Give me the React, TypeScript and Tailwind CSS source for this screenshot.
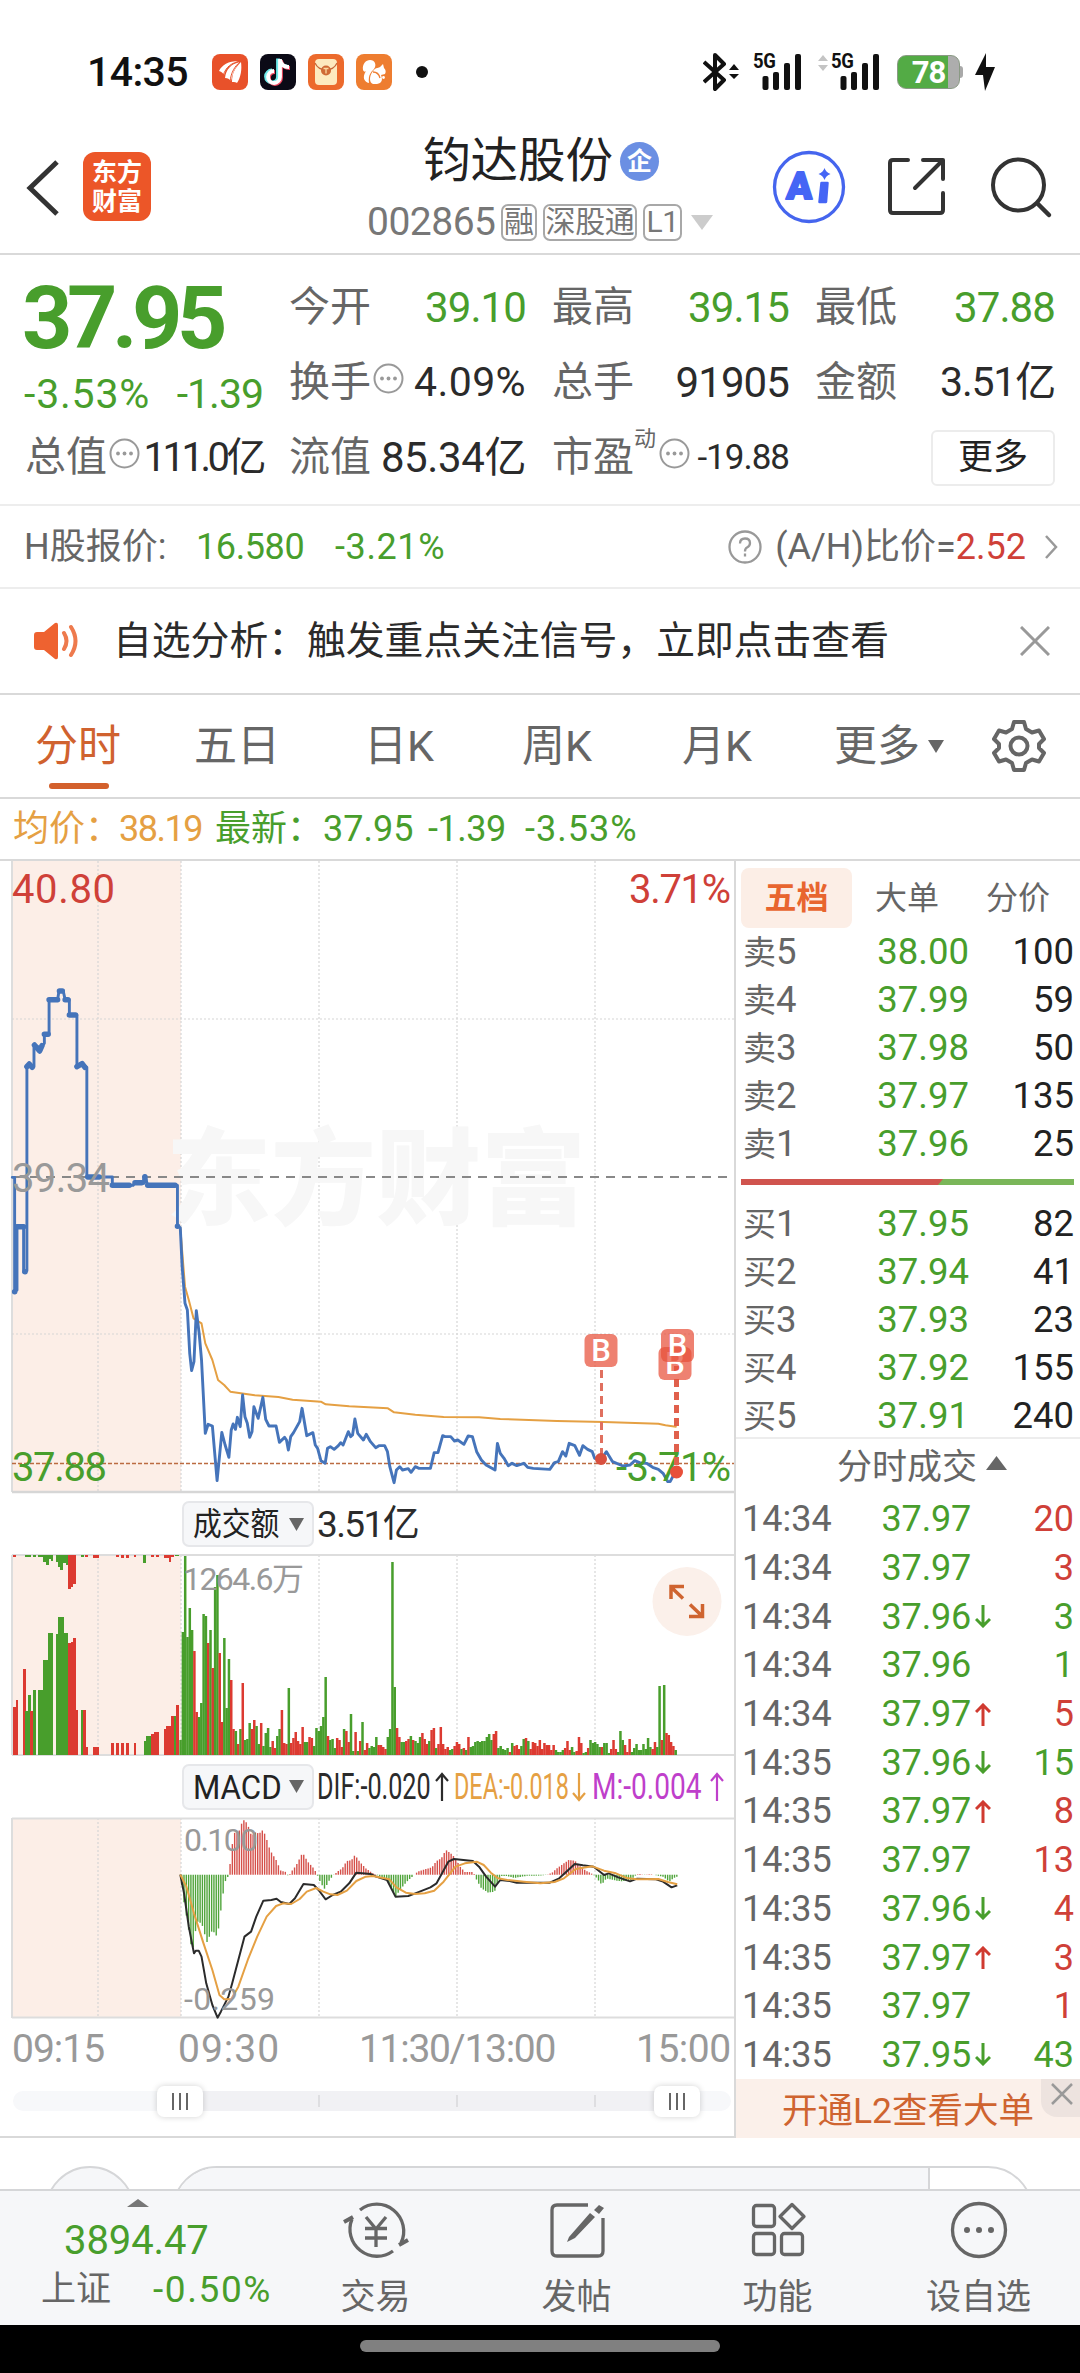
import type { ReactNode } from 'react'

const GREEN = '#489e2c'
const RED = '#dc3a31'

interface Level {
  label: string
  price: string
  volume: string
}

interface Trade {
  time: string
  price: string
  volume: string
  dir?: 'up' | 'down'
  side: 'buy' | 'sell'
}

const asks: Level[] = [
  { label: '卖5', price: '38.00', volume: '100' },
  { label: '卖4', price: '37.99', volume: '59' },
  { label: '卖3', price: '37.98', volume: '50' },
  { label: '卖2', price: '37.97', volume: '135' },
  { label: '卖1', price: '37.96', volume: '25' },
]

const bids: Level[] = [
  { label: '买1', price: '37.95', volume: '82' },
  { label: '买2', price: '37.94', volume: '41' },
  { label: '买3', price: '37.93', volume: '23' },
  { label: '买4', price: '37.92', volume: '155' },
  { label: '买5', price: '37.91', volume: '240' },
]

const trades: Trade[] = [
  { time: '14:34', price: '37.97', volume: '20', side: 'buy' },
  { time: '14:34', price: '37.97', volume: '3', side: 'buy' },
  { time: '14:34', price: '37.96', volume: '3', dir: 'down', side: 'sell' },
  { time: '14:34', price: '37.96', volume: '1', side: 'sell' },
  { time: '14:34', price: '37.97', volume: '5', dir: 'up', side: 'buy' },
  { time: '14:35', price: '37.96', volume: '15', dir: 'down', side: 'sell' },
  { time: '14:35', price: '37.97', volume: '8', dir: 'up', side: 'buy' },
  { time: '14:35', price: '37.97', volume: '13', side: 'buy' },
  { time: '14:35', price: '37.96', volume: '4', dir: 'down', side: 'buy' },
  { time: '14:35', price: '37.97', volume: '3', dir: 'up', side: 'buy' },
  { time: '14:35', price: '37.97', volume: '1', side: 'buy' },
  { time: '14:35', price: '37.95', volume: '43', dir: 'down', side: 'sell' },
]

// Series are stored on a 1568-wide grid, three units per pixel vertically
const SX = 740 / 1568

const priceLine =
  '26,-8 31,-8 31,335 36,330 36,138 50,138 50,277 57,272 57,-340 62,-350 68,-336 72,-340 72,-405 80,-400 84,-385 90,-405 94,-410 94,-437 104,-437 104,-541 122,-541 125,-567 134,-567 138,-541 147,-541 147,-495 163,-495 163,-338 174,-350 184,-338 184,-9 210,-9 238,-9 238,16 282,16 286,8 305,10 307,-12 313,16 376,16 376,138 382,143 386,260 392,370 397,390 402,520 406,572 411,545 416,392 422,460 427,540 435,760 441,733 450,738 455,820 460,902 465,830 470,757 477,795 485,832 490,750 494,732 499,748 503,712 509,740 514,645 519,710 524,730 529,772 534,755 538,680 547,715 557,652 563,718 570,738 585,738 592,787 603,772 607,780 611,810 616,770 622,758 635,725 640,685 650,767 663,758 668,795 673,805 680,842 689,850 694,805 700,800 708,808 717,797 722,788 727,795 738,755 743,770 747,765 752,717 758,760 770,780 776,763 785,785 796,803 803,797 815,797 821,815 826,860 835,908 840,870 847,860 853,870 865,866 871,877 880,860 888,865 912,865 920,818 928,818 938,767 943,770 955,770 963,783 970,780 983,793 992,768 1001,770 1010,815 1020,840 1030,855 1049,870 1054,790 1060,820 1068,835 1077,857 1085,850 1095,857 1110,850 1118,862 1130,865 1165,868 1175,848 1183,845 1192,815 1199,828 1206,790 1218,797 1228,826 1235,797 1245,808 1255,815 1260,835 1273,840 1285,815 1298,845 1320,858 1335,855 1345,842 1355,848 1370,850 1383,862 1395,868 1405,880 1415,905 1420,905 1430,878'

// Auction ticks, drawn heavier than the rest of the line
const auctionDots =
  'M31,335h.1 M36,140h14 M53,275h.1 M57,-340l5,-8 6,10 M73,-405l11,18 5,-16 M94,-437h8 M104,-541h18 M126,-567h6 M138,-541h6 M147,-495h13 M163,-340l11,-9 6,11 M186,-9h24 M238,16h36 M286,8h14 M307,-10v10 M313,16h58 M376,139h.1'

const avgLine =
  '382,143 392,320 400,360 410,415 427,430 435,490 450,540 462,600 475,615 488,635 510,640 540,646 590,651 620,659 680,665 690,673 740,679 822,685 835,697 880,704 940,711 1015,712 1060,717 1180,723 1280,726 1395,731 1410,736 1432,740'

const difLine =
  '382,374 390,430 400,530 411,610 415,602 421,602 427,620 437,700 450,765 461,803 468,785 484,740 492,700 505,630 518,560 532,545 543,500 558,452 575,450 586,446 595,456 613,462 625,445 643,402 665,405 675,420 690,448 705,435 722,425 740,400 755,368 785,372 797,380 820,390 838,440 865,438 880,430 912,412 925,400 950,335 962,327 1002,333 1015,350 1030,380 1049,410 1060,390 1080,393 1095,398 1165,398 1185,385 1218,342 1235,346 1258,350 1280,375 1290,370 1310,382 1335,394 1350,386 1390,388 1405,395 1423,412 1435,406'

const deaLine =
  '382,374 395,410 411,490 430,575 450,660 465,735 475,748 490,748 505,710 525,630 545,560 565,500 585,468 600,460 617,462 635,447 650,425 670,414 685,425 700,433 715,435 735,422 755,393 775,380 790,378 825,388 840,412 860,428 880,432 900,430 920,422 940,395 965,350 985,340 1010,335 1025,345 1040,368 1055,385 1075,390 1110,395 1145,400 1175,396 1195,385 1220,357 1255,349 1280,362 1305,370 1330,385 1350,388 1395,387 1415,396 1435,403'

// One bar per minute from 09:30, positive = red, negative = green
const volumes = [
  -15, -123, -199, -118, -147, -125, 104, 43, -38, -52, -141, -139, 112, -125, 87, -168, -180, 102, 33, -117, -47, -96, 75,
  26, -24, 11, -26, 72, -15, -16, -32, 26, 35, -29, -11, 32, -9, -22, -27, -8, 14, 7, -19, -26, 45, 12, 11, -67, 12, 17, 23,
  14, 11, 28, -13, -13, 18, 17, -9, -27, -24, -29, -38, -78, 19, -15, -16, -7, 17, 15, 8, -26, 24, 13, -41, -4, 23, -4, 14,
  -33, 5, 12, -7, -9, -8, -18, 10, 10, 8, 6, -18, -26, -193, -68, 27, 18, -13, -13, 14, 16, -19, 15, -14, -12, -18, 22, 16,
  11, -14, 25, 27, -7, 11, 28, 11, 6, 8, -5, -6, 9, 13, 11, -6, 7, -5, 18, -8, -9, -13, -14, -13, -14, -14, -18, -21, -15,
  21, 24, -7, -9, -6, -5, -7, 3, -12, 9, 10, 6, -9, -16, 17, -14, 6, 13, 12, 9, 15, 6, 12, 10, 10, 5, 10, -5, -3, -3, -5, 7,
  14, 5, -8, -3, 4, 18, 12, -2, -3, 7, -15, -12, -13, -11, -8, 8, -12, -12, -2, 6, 15, 6, -3, -24, -15, 10, 3, 16, -3, -7,
  -11, -5, -5, -11, -6, -17, -8, 6, 13, -8, -69, 15, -70, 22, 20, 13, 9, -5,
]

// Main session bar pitch, in grid units
const STEP = 1054 / volumes.length

// [x0, x1, top, red]
const auctionBars: [number, number, number, number][] = [
  [27, 33, 500, 1], [33, 39, 480, 1], [49, 55, 388, 1], [54, 60, 513, 0], [59, 66, 465, 0], [64, 70, 513, 1],
  [70, 77, 450, 0], [81, 91, 450, 0], [91, 102, 360, 0], [102, 112, 280, 0], [118, 124, 282, 0], [123, 135, 232, 0],
  [135, 145, 278, 0], [144, 150, 310, 1], [150, 156, 306, 1], [155, 161, 295, 1], [160, 166, 510, 1], [171, 176, 510, 0],
  [176, 182, 510, 1], [181, 187, 620, 1], [197, 210, 620, 1], [235, 241, 610, 1], [246, 252, 610, 1], [257, 263, 610, 1],
  [267, 273, 610, 1], [283, 289, 610, 1], [305, 311, 603, 0], [309, 322, 587, 0], [320, 326, 583, 1], [326, 337, 576, 1],
  [347, 353, 567, 1], [352, 363, 558, 1], [362, 369, 527, 1], [368, 374, 527, 0], [373, 379, 496, 1],
]

const hangingBars: [number, number, number, number][] = [
  [27, 34, 50, 1], [52, 66, 50, 0], [70, 77, 50, 0], [81, 91, 50, 0], [91, 97, 66, 0], [97, 103, 74, 0], [103, 108, 57, 0],
  [108, 113, 63, 0], [118, 123, 66, 0], [123, 128, 80, 0], [128, 134, 90, 0], [134, 139, 70, 0], [139, 144, 76, 0],
  [144, 150, 148, 1], [150, 155, 142, 1], [155, 160, 132, 1], [171, 177, 52, 0], [180, 186, 50, 1], [197, 210, 53, 1],
  [246, 252, 50, 1], [257, 263, 54, 1], [267, 273, 54, 1], [283, 289, 50, 1], [304, 310, 70, 0], [320, 326, 52, 1],
  [331, 337, 52, 1], [347, 358, 54, 1], [358, 363, 65, 1], [363, 368, 50, 1], [370, 379, 48, 0],
]

const histPoints: [number, number][] = [
  [382, 374], [387, 425], [392, 480], [397, 510], [402, 565], [408, 607], [414, 545], [420, 510], [430, 530], [438, 578],
  [450, 540], [460, 560], [465, 520], [470, 455], [477, 395], [485, 375], [488, 335], [495, 250], [503, 245], [509, 240],
  [514, 207], [524, 220], [533, 258], [543, 245], [548, 252], [557, 240], [563, 258], [572, 300], [585, 330], [595, 362],
  [606, 366], [611, 380], [617, 366], [628, 345], [641, 308], [652, 335], [665, 355], [672, 374], [680, 400], [688, 417],
  [696, 395], [706, 376], [715, 365], [725, 355], [735, 333], [745, 330], [752, 315], [762, 335], [775, 355], [790, 370],
  [797, 374], [820, 390], [828, 410], [838, 440], [850, 415], [862, 395], [875, 378], [885, 365], [900, 358], [915, 352],
  [925, 333], [935, 325], [945, 300], [957, 312], [965, 325], [975, 350], [985, 366], [1003, 366], [1010, 390], [1020, 415],
  [1035, 428], [1048, 425], [1055, 395], [1062, 378], [1075, 378], [1090, 384], [1105, 380], [1120, 377], [1145, 377],
  [1160, 374], [1170, 368], [1180, 355], [1190, 345], [1205, 330], [1218, 332], [1230, 350], [1242, 362], [1255, 372],
  [1262, 380], [1275, 404], [1285, 385], [1300, 390], [1315, 394], [1335, 392], [1345, 378], [1353, 371], [1365, 375],
  [1378, 372], [1390, 376], [1405, 380], [1418, 395], [1428, 384], [1437, 378],
]

function histAt(x: number) {
  for (let i = 1; i < histPoints.length; i++) {
    const [x0, y0] = histPoints[i - 1]
    const [x1, y1] = histPoints[i]
    if (x <= x1) return y0 + ((y1 - y0) * (x - x0)) / (x1 - x0)
  }
  return 378
}

function InfoDots() {
  return (
    <svg className="h-[31px] w-[31px] shrink-0 -translate-y-1" viewBox="0 0 31 31" fill="none">
      <circle cx="15.5" cy="15.5" r="14" stroke="#999" strokeWidth="2" />
      <g fill="#999">
        <circle cx="9" cy="15.5" r="1.9" />
        <circle cx="15.5" cy="15.5" r="1.9" />
        <circle cx="22" cy="15.5" r="1.9" />
      </g>
    </svg>
  )
}

function Signal() {
  return (
    <div className="relative h-[38px] w-[49px]">
      <span className="absolute left-0 top-0 origin-left scale-x-[0.88] text-[21px] font-bold leading-[16px] tracking-[-0.5px]">5G</span>
      <svg className="absolute inset-0" width="49" height="38" fill="#111">
        <rect x="9.500" y="23" width="6" height="14" rx="2" />
        <rect x="20" y="19" width="6" height="18" rx="2" />
        <rect x="31" y="10" width="6" height="27" rx="2" />
        <rect x="42" y="1" width="6" height="36" rx="2" />
      </svg>
    </div>
  )
}

function StatusBar() {
  return (
    <div className="flex h-[115px] items-center pl-[87px] pt-[29px] text-[#111]">
      <span className="w-[125px] text-[41px] font-medium leading-none tracking-[-0.6px]">14:35</span>
      <div className="flex gap-[12px]">
        <svg width="36" height="36" viewBox="0 0 36 36">
          <rect width="36" height="36" rx="8" fill="#e8512a" />
          <g fill="#fff">
            <path d="M7 17c3-6 9-10 20-10-8 3-13 6-15 14-1-2-2-3-5-4z" />
            <path d="M13 24c1-9 6-14 15-16-5 5-7 10-9 19-2-2-3-3-6-3z" />
            <path d="M20 28c0-9 3-14 9-20 1 7 0 15-4 21-1-1-2-1-5-1z" />
          </g>
          <path d="M11 22C14 12 20 9 28 7M18 28C19 18 23 12 28 8" fill="none" stroke="#e8512a" strokeWidth="1" />
        </svg>
        <svg width="36" height="36" viewBox="0 0 36 36">
          <rect width="36" height="36" rx="8" fill="#0b0a16" />
          <g fill="none" strokeWidth="3.800">
            <path d="M19 5v18a6 6 0 1 1-6-6M19 6c1 4 4 7 9 7" stroke="#6fe9ea" transform="translate(-1 -0.500)" />
            <path d="M20 5v18a6 6 0 1 1-6-6M20 6c1 4 4 7 9 7" stroke="#f0475f" transform="translate(1 1)" />
            <path d="M20 5v18a6 6 0 1 1-6-6M20 6c1 4 4 7 9 7" stroke="#fff" />
          </g>
        </svg>
        <svg width="36" height="36" viewBox="0 0 36 36">
          <rect width="36" height="36" rx="8" fill="#ec6a2c" />
          <rect x="7" y="5" width="22" height="26" rx="4" fill="#fdeabf" />
          <path d="M7 9c4 9 18 9 22 0" stroke="#c6683a" strokeWidth="1.300" fill="none" />
          <circle cx="18" cy="16.500" r="5" fill="#cf6a35" />
          <path d="M15.500 14.500h5M18 14.500v5" stroke="#fdd9a0" strokeWidth="1.300" />
        </svg>
        <svg width="36" height="36" viewBox="0 0 36 36">
          <rect width="36" height="36" rx="8" fill="#ee7d30" />
          <path d="M7 16c-1-6 3-10 7-10 5 0 7 5 4 9-3 3-6 6-5 14-5-1-7-6-3-12-1 1-2 1-3-1z" fill="#fff" />
          <path d="M17 17c3-4 6-3 7-4l3-3 1 4c2 2 2 4 1 6l-4 1c2 5 1 8-4 9h-4c-4-1-4-8 0-13z" fill="#fff" />
          <path d="M17 18c4 0 6 2 7 6" stroke="#ee7d30" strokeWidth="1.300" fill="none" />
          <circle cx="27.500" cy="23.500" r="1.400" fill="#fff" />
        </svg>
      </div>
      <span className="ml-[24px] h-3 w-3 rounded-full bg-[#111]" />
      <div className="ml-[275px] flex items-center">
        <svg width="36" height="40" viewBox="0 0 36 40" fill="none">
          <path d="M1 10l20 18-9 9V3l9 9L1 30" stroke="#111" strokeWidth="4" strokeLinejoin="round" />
          <path d="M26 18l5-6 5 6zM26 22l5 5 5-5z" fill="#111" />
        </svg>
        <div className="ml-[14px]"><Signal /></div>
        <svg className="mb-[18px] ml-[15px]" width="12" height="18" fill="#c4c4c4">
          <path d="M1 7l5-6 5 6zM1 11l5 6 5-6z" />
        </svg>
        <div className="ml-[2px]"><Signal /></div>
        <div className="ml-[17px] flex h-[34px] w-[63px] items-center justify-center overflow-hidden rounded-[9px] border border-[#8a9a84] bg-linear-to-r from-[#53ab45] from-82% to-[#adadad] to-82% text-[31px] font-bold leading-none tracking-[-1px] text-white">
          78
        </div>
        <span className="h-[12px] w-[3px] rounded-r-sm bg-[#a9a9a9]" />
        <svg className="ml-[11px]" width="22" height="40" viewBox="0 0 22 40">
          <path d="M12 1L1 23h8l2 16 10-24h-9z" fill="#111" />
        </svg>
      </div>
    </div>
  )
}

function Tag({ children }: { children: ReactNode }) {
  return (
    <span className="flex h-[37px] items-center rounded-[7px] border-2 border-[#a8a8a8] px-[1px] text-[30px] leading-none tracking-[-0.4px] text-[#777]">
      {children}
    </span>
  )
}

function Header() {
  return (
    <div className="flex h-[140px] border-b-2 border-[#d9d9d9]">
      <div className="flex w-[367px] items-start pl-[26px] pt-[37px]">
        <svg className="mt-[7px]" width="34" height="58" viewBox="0 0 34 58" fill="none">
          <path d="M31 3L4 29l27 26" stroke="#333" strokeWidth="5" />
        </svg>
        <div className="ml-[23px] flex h-[69px] w-[68px] flex-col items-center justify-center rounded-[12px] bg-[#ec5628] text-[25px] font-bold leading-[29px] text-white">
          <span>东方</span>
          <span>财富</span>
        </div>
      </div>
      <div className="w-[405px] pt-[19px]">
        <div className="flex h-[56px] items-center pl-[56px]">
          <span className="text-[47.500px] leading-none text-[#222]">钧达股份</span>
          <span className="mb-[2px] ml-[7px] flex h-[39px] w-[39px] items-center justify-center rounded-full bg-[#6b8fe3] text-[25px] font-bold leading-none text-white">
            企
          </span>
        </div>
        <div className="mt-[12px] flex h-[40px] items-center">
          <span className="w-[134px] text-[39px] leading-none tracking-[-0.500px] text-[#777]">002865</span>
          <div className="flex gap-[6px]">
            <Tag>融</Tag>
            <Tag>深股通</Tag>
            <Tag>L1</Tag>
          </div>
          <svg className="ml-[9px]" width="22" height="15"><path d="M0 0h22L11 15z" fill="#ccc" /></svg>
        </div>
      </div>
      <div className="flex items-start pt-[35px]">
        <svg width="74" height="74" viewBox="0 0 74 74" fill="none">
          <circle cx="37" cy="37" r="34.500" stroke="#4565ee" strokeWidth="3.300" />
          <g transform="translate(28.500 0) skewX(-3)">
            <text x="1" y="49.500" textAnchor="middle" fontSize="38" fontWeight="900" fill="#4565f5" stroke="#4565f5" strokeWidth="2" strokeLinejoin="round">A</text>
          </g>
          <path d="M49.500 33h6l-1.500 19h-6.500z" fill="#4565f5" stroke="#4565f5" strokeWidth="2.500" strokeLinejoin="round" />
          <path d="M52.500 18q1.500 4.500 6 6-4.500 1.500-6 6-1.500-4.500-6-6 4.500-1.500 6-6z" fill="#4565f5" />
        </svg>
        <svg className="ml-[40px] mt-[5px]" width="62" height="62" viewBox="0 0 62 62" fill="none" stroke="#333" strokeWidth="4" strokeLinecap="round" strokeLinejoin="round">
          <path d="M22 5H7q-3 0-3 3v47q0 3 3 3h47q3 0 3-3V38M37 5h20v19M56 6L29 33" />
        </svg>
        <svg className="ml-[41px] mt-[4px]" width="64" height="66" viewBox="0 0 64 66" fill="none" stroke="#333" strokeWidth="4" strokeLinecap="round">
          <circle cx="29.500" cy="31" r="25.500" />
          <path d="M49 50l11 11" strokeWidth="4.500" />
        </svg>
      </div>
    </div>
  )
}

interface StatProps {
  label: string
  value: string
  color?: string
  info?: boolean
  className?: string
}

function Stat({ label, value, color = 'text-[#2b2b2b]', info = false, className = 'text-[42px] tracking-[-0.9px]' }: StatProps) {
  return (
    <div className="flex items-center whitespace-nowrap">
      <span className="text-[41px] leading-none text-[#666]">{label}</span>
      {info && <div className="ml-[2px]"><InfoDots /></div>}
      <span className={`ml-auto leading-none ${className} ${color}`}>{value}</span>
    </div>
  )
}

function Quote() {
  return (
    <div className="h-[251px] border-b-2 border-[#ededed] pl-[25px] pt-[15px]">
      <div className="grid grid-cols-[238px_237px_237px_240px] grid-rows-[75px_75px_75px] gap-x-[26px]">
        <div className="row-span-2 flex flex-col whitespace-nowrap text-[#489e2c]">
          <span className="-ml-[3px] mt-[3px] text-[88px] font-bold leading-[90px] tracking-[-5.5px]">37.95</span>
          <div className="mt-[8px] flex justify-between text-[41px] leading-[46px]">
            <span className="-ml-[1px] tracking-[0.8px]">-3.53%</span>
            <span className="tracking-[-1px]">-1.39</span>
          </div>
        </div>
        <Stat label="今开" value="39.10" color="text-[#489e2c]" />
        <Stat label="最高" value="39.15" color="text-[#489e2c]" />
        <Stat label="最低" value="37.88" color="text-[#489e2c]" />
        <Stat label="换手" value="4.09%" info className="text-[41px] tracking-[0.4px]" />
        <Stat label="总手" value="91905" />
        <Stat label="金额" value="3.51亿" className="text-[41px] tracking-[-1.2px]" />
        <Stat label="总值" value="111.0亿" info className="text-[40px] tracking-[-3.5px]" />
        <Stat label="流值" value="85.34亿" className="text-[42px] tracking-[-0.4px]" />
        <div className="flex items-center whitespace-nowrap">
          <span className="text-[41px] leading-none text-[#666]">市盈</span>
          <span className="mb-[38px] text-[22px] leading-none text-[#666]">动</span>
          <div className="ml-[3px]"><InfoDots /></div>
          <span className="ml-auto text-[35px] leading-none tracking-[-1px] text-[#2b2b2b]">-19.88</span>
        </div>
        <div className="flex items-center justify-end">
          <span className="flex h-[56px] w-[124px] items-center justify-center rounded-[6px] border-2 border-[#ececec] text-[35px] leading-none text-[#222]">
            更多
          </span>
        </div>
      </div>
    </div>
  )
}

function HShareRow() {
  return (
    <div className="flex h-[83px] items-center border-b-2 border-[#ededed] pl-[24px] pr-[22px] text-[36px] leading-none text-[#666]">
      <span className="w-[172px]">H股报价:</span>
      <span className="w-[139px] tracking-[-0.400px] text-[#489e2c]">16.580</span>
      <span className="tracking-[0.600px] text-[#489e2c]">-3.21%</span>
      <svg className="ml-auto" width="34" height="34" viewBox="0 0 34 34" fill="none" stroke="#999" strokeWidth="2.300">
        <circle cx="17" cy="17" r="15.500" />
        <path d="M12 13.500q0-5 5-5t5 4.500q0 3-3 4.500-2 1-2 4" />
        <path d="M17 23.500v3" />
      </svg>
      <span className="ml-[13px] whitespace-nowrap">(A/H)比价=<span className="text-[#cf4038]">2.52</span></span>
      <svg className="ml-[19px]" width="13" height="24" fill="none" stroke="#999" strokeWidth="2.500"><path d="M1 1l10 11L1 23" /></svg>
    </div>
  )
}

function NoticeRow() {
  return (
    <div className="flex h-[106px] items-center border-b-2 border-[#d9d9d9] pl-[33px] pr-[30px]">
      <svg width="46" height="38" viewBox="0 0 46 38" fill="none">
        <path d="M1 13q0-3 3-3h7L22 1q3-1 3 2v32q0 3-3 2l-11-9H4q-3 0-3-3z" fill="#ee6230" />
        <path d="M31 11q5 8 0 16M38 5q9 14 0 28" stroke="#ee7a4d" strokeWidth="4" strokeLinecap="round" />
      </svg>
      <span className="ml-[34px] whitespace-nowrap text-[38.800px] leading-none text-[#2b2b2b]">自选分析：触发重点关注信号，立即点击查看</span>
      <svg className="ml-auto" width="30" height="30" stroke="#999" strokeWidth="3"><path d="M1 1l28 28M29 1L1 29" /></svg>
    </div>
  )
}

function PeriodTabs() {
  return (
    <div className="relative flex h-[104px] items-center border-b-2 border-[#d9d9d9] pl-[35px] text-[43px] leading-none text-[#666]">
      <span className="w-[159px] text-[#d0622f]">分时</span>
      <span className="w-[170px]">五日</span>
      <span className="w-[158px]">日K</span>
      <span className="w-[160px]">周K</span>
      <span className="w-[152px]">月K</span>
      <span>更多</span>
      <svg className="ml-[8px]" width="16" height="13"><path d="M0 0h16L8 13z" fill="#666" /></svg>
      <svg className="ml-[48px]" width="54" height="54" viewBox="0 0 54 54" fill="none" stroke="#666" strokeWidth="4" strokeLinejoin="round">
        <path d="M22 3h10l2 7 6 3.500 7-2 5 8.500-5 5v4l5 5-5 8.500-7-2-6 3.500-2 7H22l-2-7-6-3.500-7 2L2 34l5-5v-4l-5-5 5-8.500 7 2 6-3.500z" />
        <circle cx="27" cy="27" r="8.500" />
      </svg>
      <span className="absolute bottom-[8px] left-[49px] h-[6px] w-[60px] rounded-full bg-[#d3602c]" />
    </div>
  )
}

function AverageRow() {
  return (
    <div className="flex h-[62px] items-center whitespace-nowrap border-b-2 border-[#d9d9d9] pl-[13px] text-[36px] leading-none text-[#489e2c]">
      <span className="w-[106px] text-[#e5a043]">均价：</span>
      <span className="w-[96px] tracking-[-1.500px] text-[#e5a043]">38.19</span>
      <span className="w-[108px]">最新：</span>
      <span className="w-[105px]">37.95</span>
      <span className="w-[97px] tracking-[-0.500px]">-1.39</span>
      <span className="tracking-[1px]">-3.53%</span>
    </div>
  )
}

function Grid({ top, bottom }: { top: number; bottom: number }) {
  return (
    <g>
      <rect x="12" y={top} width="169" height={bottom - top} fill="#fceee7" />
      {[98, 181, 319, 457, 595].map((x) => (
        <path key={x} d={`M${x} ${top}V${bottom}`} stroke="#d6d6d6" strokeWidth="1.200" strokeDasharray="2 2" />
      ))}
      <path d={`M12 ${top}V${bottom}`} stroke="#ddd" strokeWidth="2" />
    </g>
  )
}

function Marker({ x, y }: { x: number; y: number }) {
  return (
    <g>
      <rect x={x} y={y} width="33" height="33" rx="6" fill="#e8503a" fillOpacity="0.720" />
      <text x={x + 16.500} y={y + 27} textAnchor="middle" fontSize="31" fontWeight="500" fill="#fff">B</text>
    </g>
  )
}

function PriceChart() {
  return (
    <svg className="block" width="734" height="633" viewBox="0 861 734 633">
      <Grid top={861} bottom={1492} />
      <text x="166" y="1216" fontSize="105" fontWeight="900" fill="#f7f7f7">东方财富</text>
      <path d="M12 1019H734M12 1334H734" stroke="#d6d6d6" strokeWidth="1.200" strokeDasharray="2 2" />
      <path d="M12 1492H734" stroke="#d6d6d6" strokeWidth="2.500" />
      <path d="M14 1177H734" stroke="#888" strokeWidth="2" strokeDasharray="9 7" />
      <path d="M12 1463.500H734" stroke="#bb6b41" strokeWidth="1.300" strokeDasharray="4 2" />
      <g transform={`translate(0 1180) scale(${SX} 0.33333)`} fill="none" strokeLinejoin="round" strokeLinecap="round">
        <polyline points={avgLine} stroke="#e5a043" strokeWidth="2" vectorEffect="non-scaling-stroke" />
        <polyline points={priceLine} stroke="#4574ba" strokeWidth="2.900" vectorEffect="non-scaling-stroke" />
        <path d={auctionDots} stroke="#4574ba" strokeWidth="5.500" vectorEffect="non-scaling-stroke" />
      </g>
      <g fontSize="40">
        <text x="12" y="903" fill="#cf4038" textLength="103">40.80</text>
        <text x="731" y="903" fill="#cf4038" textAnchor="end" textLength="102">3.71%</text>
        <text x="12" y="1192" fill="#999" textLength="98">39.34</text>
        <text x="12" y="1481" fill="#489e2c" textLength="95">37.88</text>
        <text x="731" y="1481" fill="#489e2c" textAnchor="end" textLength="115">-3.71%</text>
      </g>
      <path d="M601.500 1370V1455" stroke="#e0705f" strokeWidth="3" strokeDasharray="8 5" />
      <path d="M676.500 1366V1466" stroke="#e0604c" strokeWidth="5" strokeDasharray="8 5" />
      <ellipse cx="601" cy="1459" rx="6" ry="6" fill="#d9503f" />
      <ellipse cx="676.500" cy="1472" rx="6.500" ry="6.500" fill="#e8503a" />
      <Marker x={584.500} y={1334} />
      <Marker x={658.500} y={1347} />
      <Marker x={661} y={1329} />
    </svg>
  )
}

function VolumeChart() {
  return (
    <svg className="block" width="734" height="202" viewBox="0 1554 734 202">
      <Grid top={1555} bottom={1755} />
      <path d="M12 1555H734" stroke="#ddd" strokeWidth="2" />
      <path d="M12 1755H734" stroke="#ddd" strokeWidth="2" />
      <g shapeRendering="crispEdges">
        {auctionBars.map(([x0, x1, top, red], i) => (
          <rect key={i} x={x0 * SX} y={1540 + top / 3} width={(x1 - x0) * SX} height={(645 - top) / 3} fill={red ? RED : GREEN} />
        ))}
        {hangingBars.map(([x0, x1, end, red], i) => (
          <rect key={i} x={x0 * SX} y={1555} width={(x1 - x0) * SX} height={(end - 45) / 3} fill={red ? RED : GREEN} />
        ))}
      </g>
      {volumes.map((v, i) => (
        <rect key={i} x={(380 + i * STEP) * SX} y={1755 - Math.abs(v)} width="2.500" height={Math.abs(v)} fill={v > 0 ? RED : GREEN} />
      ))}
      <text x="183" y="1590" fontSize="32" fill="#999" textLength="121">1264.6万</text>
      <circle cx="687" cy="1601.500" r="34.500" fill="#fbf0ea" />
      <path d="M671 1599V1586.500H684M672 1588L683 1598.500M702.500 1604V1616.500H689M701 1615L690 1604.500" fill="none" stroke="#cf6430" strokeWidth="3.500" />
    </svg>
  )
}

function MacdChart() {
  return (
    <svg className="block" width="734" height="202" viewBox="0 1817 734 202">
      <Grid top={1818} bottom={2018} />
      <path d="M12 1818.500H734" stroke="#ddd" strokeWidth="2" />
      <path d="M12 2017.500H734" stroke="#ddd" strokeWidth="2" />
      {volumes.map((_, i) => {
        const x = 385 + i * STEP
        const y = histAt(x)
        return <path key={i} d={`M${x * SX} 1874.700V${1750 + y / 3}`} stroke={y < 374 ? '#d5504a' : '#4fa43a'} strokeWidth="1.400" />
      })}
      <g transform={`translate(0 1750) scale(${SX} 0.33333)`} fill="none" strokeLinejoin="round">
        <polyline points={difLine} stroke="#2b2b2b" strokeWidth="2" vectorEffect="non-scaling-stroke" />
        <polyline points={deaLine} stroke="#e5a043" strokeWidth="2" vectorEffect="non-scaling-stroke" />
      </g>
      <g fontSize="32" fill="#999">
        <text x="184" y="1851" textLength="74">0.100</text>
        <text x="184" y="2010" textLength="91">-0.259</text>
      </g>
    </svg>
  )
}

function IndicatorButton({ children }: { children: ReactNode }) {
  return (
    <div className="ml-[182px] flex h-[46px] w-[132px] shrink-0 items-center justify-between rounded-[7px] border-2 border-[#e6e7ea] bg-[#f6f7f9] pl-[9px] pr-[8px]">
      <span className="w-[88px] whitespace-nowrap leading-none text-[#222]">{children}</span>
      <svg width="15" height="13"><path d="M0 0h15L7.500 13z" fill="#666" /></svg>
    </div>
  )
}

function MacdValue({ children, up = false, className }: { children: ReactNode; up?: boolean; className: string }) {
  return (
    <div className={`flex items-center ${className}`}>
      <span className="w-[118px] whitespace-nowrap text-[36px] leading-none">{children}</span>
      <svg width="14" height="30" fill="none" stroke="currentColor" strokeWidth="2.200">
        <path d={up ? 'M7 29V2M1 9l6-7 6 7' : 'M7 1v27M1 21l6 7 6-7'} />
      </svg>
    </div>
  )
}

function SliderHandle({ className }: { className: string }) {
  return (
    <span className={`absolute top-[-5px] flex h-[31px] w-[46px] items-center justify-center gap-[5px] rounded-[7px] bg-white shadow-[0_0_6px_rgba(0,0,0,0.18)] ${className}`}>
      <i className="h-[17px] w-[2px] bg-[#666]" />
      <i className="h-[17px] w-[2px] bg-[#666]" />
      <i className="h-[17px] w-[2px] bg-[#666]" />
    </span>
  )
}

function Charts() {
  return (
    <div className="w-[736px] border-r-2 border-[#d9d9d9]">
      <PriceChart />
      <div className="flex h-[60px] items-center">
        <IndicatorButton>
          <span className="inline-block origin-left scale-x-[0.9] text-[32px]">成交额</span>
        </IndicatorButton>
        <span className="ml-[3px] text-[37px] leading-none tracking-[-1.600px] text-[#2b2b2b]">3.51亿</span>
      </div>
      <VolumeChart />
      <div className="flex h-[61px] items-center">
        <IndicatorButton>
          <span className="inline-block origin-left scale-x-[0.92] text-[34px]">MACD</span>
        </IndicatorButton>
        <MacdValue up className="ml-[3px] text-[#2b2b2b]"><span className="inline-block origin-left scale-x-[0.7]">DIF:-0.020</span></MacdValue>
        <MacdValue className="ml-[5px] text-[#e5a043]"><span className="inline-block origin-left scale-x-[0.65]">DEA:-0.018</span></MacdValue>
        <MacdValue up className="ml-[6px] text-[#bf3fcb]"><span className="inline-block origin-left scale-x-[0.78]">M:-0.004</span></MacdValue>
      </div>
      <MacdChart />
      <div className="flex h-[61px] items-center pl-[12px] text-[39px] leading-none text-[#999]">
        <span className="w-[166px] tracking-[-1px]">09:15</span>
        <span className="w-[181px] tracking-[1px]">09:30</span>
        <span className="w-[277px] tracking-[-1.300px]">11:30/13:00</span>
        <span className="tracking-[-0.500px]">15:00</span>
      </div>
      <div className="relative ml-[13px] mt-[11px] h-[20px] w-[718px] rounded-full bg-[#f7f8fa]">
        <span className="absolute left-[168px] h-[20px] w-[497px] bg-[#f1f1f4]" />
        <span className="absolute left-[305px] top-[4px] h-[12px] w-[2px] bg-[#dedee1]" />
        <span className="absolute left-[443px] top-[4px] h-[12px] w-[2px] bg-[#dedee1]" />
        <span className="absolute left-[581px] top-[4px] h-[12px] w-[2px] bg-[#dedee1]" />
        <SliderHandle className="left-[144px]" />
        <SliderHandle className="left-[641px]" />
      </div>
    </div>
  )
}

function LevelRow({ level }: { level: Level }) {
  return (
    <div className="flex h-[48px] items-center pl-[7px] pr-[6px] text-[36.500px] leading-none">
      <span className="w-[80px] text-[#666]"><span className="text-[33px]">{level.label[0]}</span>{level.label[1]}</span>
      <span className="w-[146px] text-right text-[#489e2c]">{level.price}</span>
      <span className="flex-1 text-right text-[#222]">{level.volume}</span>
    </div>
  )
}

function TradeRow({ trade }: { trade: Trade }) {
  return (
    <div className="flex h-[48.700px] items-center pl-[6px] pr-[6px] text-[36px] leading-none">
      <span className="w-[100px] text-[#666]">{trade.time}</span>
      <span className="w-[129px] text-right tracking-[-0.200px] text-[#489e2c]">{trade.price}</span>
      <span className="w-[21px] pl-[4px]">
        {trade.dir && (
          <svg width="16" height="23" fill="none" strokeWidth="3" stroke={trade.dir === 'up' ? '#d03a30' : GREEN}>
            <path d={trade.dir === 'up' ? 'M8 23V3M1 9l7-7 7 7' : 'M8 0v20M1 14l7 7 7-7'} />
          </svg>
        )}
      </span>
      <span className={`flex-1 text-right ${trade.side === 'buy' ? 'text-[#cf4038]' : 'text-[#489e2c]'}`}>{trade.volume}</span>
    </div>
  )
}

function OrderBook() {
  return (
    <div className="flex-1">
      <div className="flex h-[67px] items-end text-[32px] leading-none text-[#666]">
        <span className="ml-[5px] flex h-[60px] w-[111px] items-center justify-center rounded-[8px] bg-[#fceee6] font-bold text-[#e8652f]">五档</span>
        <span className="flex h-[60px] w-[110px] items-center justify-center">大单</span>
        <span className="flex h-[60px] w-[112px] items-center justify-center">分价</span>
      </div>
      {asks.map((l) => <LevelRow key={l.label} level={l} />)}
      <div className="ml-[5px] mr-[6px] mt-[11px] flex h-[6px] bg-[#7ab659]">
        <svg width="202" height="6"><path d="M0 0h202l-5 6H0z" fill="#d0544e" /></svg>
      </div>
      <div className="h-[15px]" />
      {bids.map((l) => <LevelRow key={l.label} level={l} />)}
      <div className="-mt-[3px] flex h-[58px] items-center justify-center gap-[9px] border-t-2 border-[#ededed] pl-[28px] text-[35px] leading-none text-[#666]">
        <span>分时成交</span>
        <svg className="mb-[8px]" width="21" height="14"><path d="M0 14h21L10.500 0z" fill="#666" /></svg>
      </div>
      {trades.map((t, i) => <TradeRow key={i} trade={t} />)}
      <div className="relative flex h-[59px] items-center justify-center bg-[#fbf0ea] pt-[5px] text-[35.500px] leading-none text-[#cf6430]">
        开通L2查看大单
        <span className="absolute right-0 top-0 flex h-[38px] w-[39px] items-center justify-center rounded-bl-[16px] bg-[#ede3df]">
          <svg className="-mt-[8px] ml-[3px]" width="22" height="22" stroke="#999" strokeWidth="2.500"><path d="M1 1l20 20M21 1L1 21" /></svg>
        </span>
      </div>
    </div>
  )
}

function NavItem({ label, children }: { label: string; children: ReactNode }) {
  return (
    <div className="flex w-[201px] flex-col items-center pt-[8px] text-[#666]">
      <svg width="66" height="62" viewBox="0 0 66 62" fill="none" stroke="#666" strokeWidth="3.300">{children}</svg>
      <span className="mt-[19px] whitespace-nowrap text-[35px] leading-none">{label}</span>
    </div>
  )
}

function BottomNav() {
  return (
    <div className="flex h-[136px] border-t-2 border-[#d5d6d8] bg-[#f6f7f9]">
      <div className="relative w-[275px] shrink-0">
        <svg className="absolute left-[127px] top-[8px]" width="22" height="8"><path d="M0 8h22L11 0z" fill="#777" /></svg>
        <div className="pl-[64px] pt-[30px] text-[40px] leading-[40px] tracking-[-0.100px] text-[#489e2c]">3894.47</div>
        <div className="mt-[11px] flex items-center pl-[41px] text-[35px] leading-[36px]">
          <span className="w-[112px] text-[#666]">上证</span>
          <span className="text-[37px] tracking-[1.600px] text-[#489e2c]">-0.50%</span>
        </div>
      </div>
      <NavItem label="交易">
        <path d="M17 11A27 27 0 0 1 58 44M50 52A27 27 0 0 1 9 20" />
        <path d="M1 23l9-5M65 41l-9 5" strokeWidth="4" />
        <path d="M23 18l10 12 10-12M33 30v18M22 29.500h22M22 39h22" />
      </NavItem>
      <NavItem label="发帖">
        <path d="M44 6H13q-5 0-5 5v41q0 5 5 5h41q5 0 5-5V19" />
        <path d="M25 38l21-24 5 4-20 21-8 4zM50 11l5-5 5 3-5 6z" fill="#666" stroke="none" />
      </NavItem>
      <NavItem label="功能">
        <rect x="8.500" y="6.500" width="21" height="21" rx="3" />
        <rect x="8.500" y="34.500" width="21" height="21" rx="3" />
        <rect x="36.500" y="34.500" width="21" height="21" rx="3" />
        <path d="M47 5.500L59 17.500 47 29.500 35 17.500z" strokeLinejoin="round" />
      </NavItem>
      <NavItem label="设自选">
        <circle cx="33" cy="31" r="26.500" />
        <g fill="#666" stroke="none">
          <circle cx="21" cy="31" r="3" />
          <circle cx="33" cy="31" r="3" />
          <circle cx="45" cy="31" r="3" />
        </g>
      </NavItem>
    </div>
  )
}

export default function App() {
  return (
    <div className="h-[2373px] w-[1080px] overflow-hidden bg-white font-['Roboto','Noto_Sans_CJK_SC',sans-serif]">
      <StatusBar />
      <Header />
      <Quote />
      <HShareRow />
      <NoticeRow />
      <PeriodTabs />
      <AverageRow />
      <div className="flex h-[1277px] border-b-2 border-[#d9d9d9]">
        <Charts />
        <OrderBook />
      </div>
      <div className="flex h-[51px] overflow-hidden pl-[45px] pt-[28px]">
        <span className="h-[90px] w-[90px] shrink-0 rounded-full border-2 border-[#d5d6d8] bg-[#f6f7f9]" />
        <div className="ml-[37px] flex h-[90px] w-[861px] shrink-0 overflow-hidden rounded-full border-2 border-[#d5d6d8]">
          <span className="w-[756px] border-r-2 border-[#d5d6d8] bg-[#f6f7f9]" />
        </div>
      </div>
      <BottomNav />
      <div className="flex h-[48px] justify-center bg-black pt-[15px]">
        <span className="h-[12px] w-[360px] rounded-full bg-[#808080]" />
      </div>
    </div>
  )
}
